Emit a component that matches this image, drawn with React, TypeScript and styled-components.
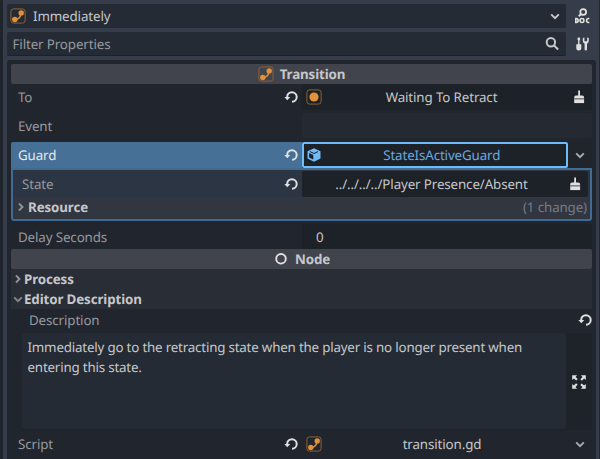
import React from "react";
import styled, { createGlobalStyle } from "styled-components";

const color = {
  base: "#363d4a",
  panel: "#21252e",
  field: "#252b34",
  value: "#1d2128",
  header: "#41444c",
  section: "#292d36",
  accent: "#70bafa",
  guard: "#467096",
  orange: "#e0913a",
  label: "#96999d",
  text: "#c5c7ca",
  icon: "#e0e0e0",
};

const GlobalStyle = createGlobalStyle`
  * { box-sizing: border-box; }
  body {
    margin: 0;
    background: ${color.base};
    font-family: "Noto Sans", sans-serif;
    font-size: 13.35px;
    line-height: 20px;
    letter-spacing: -0.12px;
    color: ${color.text};
    text-rendering: geometricPrecision;
  }
  svg { display: block; flex: none; }
`;

const Dock = styled.main`
  width: 600px;
  height: 459px;
  overflow: hidden;
  display: flex;
  flex-direction: column;
  padding: 4px 3px 0 4px;
  background: ${color.base};
  border-left: 3px solid #1f232b;
  border-right: 1px solid #23272f;
`;

const Toolbar = styled.div`
  display: grid;
  grid-template-columns: 559px 1fr;
  grid-template-rows: 24px 24px;
  row-gap: 4px;
  margin-bottom: 4px;
`;

const ToolField = styled.div<{ $inset?: boolean }>`
  display: flex;
  align-items: center;
  background: ${color.field};
  border-radius: 2px;
  border-bottom: ${(p) => (p.$inset ? "1px solid #1d2129" : "none")};
  color: ${(p) => (p.$inset ? color.label : color.text)};
  padding: 0 6px 0 ${(p) => (p.$inset ? 5.5 : 3)}px;
`;

const ToolLabel = styled.span<{ $gap?: number }>`
  flex: 1;
  margin-left: ${(p) => p.$gap ?? 0}px;
`;

const ToolButton = styled.button`
  display: flex;
  align-items: center;
  justify-content: center;
  padding: 0 0 0 1px;
  border: 0;
  background: none;
`;

const Inspector = styled.section`
  flex: 1;
  display: flex;
  flex-direction: column;
  width: 589px;
  padding: 4px 4px 0;
  background: ${color.panel};
  border-radius: 3px 3px 0 0;
`;

const Category = styled.h2`
  flex: none;
  display: flex;
  align-items: center;
  justify-content: center;
  gap: 6px;
  height: 20px;
  margin: 0;
  background: ${color.header};
  border-radius: 2px;
  font-size: 13.35px;
  font-weight: 700;
`;

const Row = styled.div<{ $height: number; $after?: number }>`
  flex: none;
  display: grid;
  grid-template-columns: 291px 1fr;
  height: ${(p) => p.$height}px;
  margin-bottom: ${(p) => p.$after ?? 0}px;
`;

const Label = styled.div<{ $variant?: "guard" | "state" }>`
  display: flex;
  align-items: center;
  justify-content: space-between;
  padding: 0 4px 0 ${(p) => (p.$variant === "state" ? 9 : 7)}px;
  color: ${(p) => (p.$variant === "guard" ? "#e3eaf0" : color.label)};
  background: ${(p) => (p.$variant === "guard" ? color.guard : p.$variant === "state" ? "#2b3543" : "none")};
  border-radius: ${(p) => (p.$variant === "guard" ? "2px 0 0 0" : "0")};
`;

const Value = styled.div<{ $tone?: "field" | "none" }>`
  display: flex;
  align-items: center;
  min-width: 0;
  background: ${(p) => (p.$tone === "field" ? "#242932" : p.$tone === "none" ? "none" : color.value)};
  border-radius: 2px;
  padding: 0 ${(p) => (p.$tone === "none" ? 7 : 5)}px 0 4px;
`;

const ValueText = styled.span<{ $inset?: number }>`
  flex: 1;
  text-align: center;
  white-space: nowrap;
  padding-right: ${(p) => p.$inset ?? 0}px;
`;

const NumberText = styled.span`
  padding-left: 10px;
`;

const ResourceValue = styled.div`
  display: grid;
  grid-template-columns: 265.5px 1fr;
  background: #20242b;
`;

const ResourceButton = styled.div`
  display: flex;
  align-items: center;
  height: 26px;
  padding: 0 4px 0 2px;
  border: 2px solid ${color.accent};
  border-radius: 2px;
  background: ${color.value};
  color: #67a9e2;
`;

const MenuSlot = styled.div`
  display: flex;
  align-items: center;
  justify-content: center;
`;

const SubInspector = styled.div`
  flex: none;
  height: 53px;
  margin-bottom: 3px;
  border: 2px solid #426b91;
  border-radius: 0 0 3px 3px;
  background: #2f3541;
  padding: 1px 2px 0 0;
`;

const SubRow = styled.div`
  display: grid;
  grid-template-columns: 289px 1fr;
  height: 26px;
`;

const Section = styled.div<{ $nested?: boolean }>`
  flex: none;
  display: flex;
  align-items: center;
  height: 20px;
  padding: 0 1px 0 ${(p) => (p.$nested ? 3 : 2)}px;
  gap: ${(p) => (p.$nested ? 2 : 1)}px;
  background: ${(p) => (p.$nested ? "#313641" : color.section)};
  font-weight: 700;
`;

const Changes = styled.span`
  margin-left: auto;
  font-weight: 400;
  color: #777b83;
`;

const DescriptionLabel = styled.div`
  flex: none;
  display: flex;
  align-items: center;
  justify-content: space-between;
  height: 24px;
  padding: 0 0 3px 18px;
  color: ${color.label};
`;

const Editor = styled.div`
  flex: none;
  display: grid;
  grid-template-columns: 544px 1fr;
  height: 97px;
  margin: 0 0 1px 11px;
  background: #1e2229;
`;

const TextArea = styled.p`
  margin: 0 0 1px;
  padding: 4px 5.5px;
  background: ${color.field};
  border-radius: 2px;
  white-space: pre-line;
  letter-spacing: -0.19px;
`;

const TransitionIcon = () => (
  <svg width="16" height="16" viewBox="0 0 16 16" fill="none">
    <rect x=".9" y=".9" width="14.2" height="14.2" rx="2.6" stroke="#8d6135" strokeWidth="1" />
    <path d="M5 11.5Q10.5 11.5 11 5" stroke={color.orange} strokeWidth="1.6" />
    <circle cx="4.8" cy="11.5" r="2.7" fill={color.orange} />
    <circle cx="11.2" cy="4.9" r="2.7" fill={color.orange} />
  </svg>
);

const StateIcon = () => (
  <svg width="16" height="16" viewBox="0 0 16 16">
    <rect x=".9" y=".9" width="14.2" height="14.2" rx="2.6" fill="none" stroke="#8d6135" />
    <circle cx="8" cy="8" r="4.6" fill={color.orange} />
  </svg>
);

const RevertIcon = () => (
  <svg width="14" height="14" viewBox="0 0 14 14">
    <path d="M3.2 8V6.9A4.75 4.75 0 1 1 8 11.7" fill="none" stroke={color.icon} strokeWidth="2" />
    <path d="M.3 6.9h6L3.3 10.3z" fill={color.icon} />
  </svg>
);

const BrushIcon = () => (
  <svg width="16" height="16" viewBox="0 0 16 16" fill={color.icon}>
    <path d="M7.2 1.5h1.8v5h2.4q1.7 0 1.7 2v.7H3.2v-.7q0-2 1.7-2h2.3z" />
    <path d="M3.2 10.2h9.9v3.9H3.2z" />
    <path d="M3.2 9.1h9.9v1.2H3.2z" fill="#85878a" />
  </svg>
);

const Chevron = ({ dir = "down", tone = "#b8babd" }: { dir?: "down" | "right"; tone?: string }) => (
  <svg width="10" height="10" viewBox="0 0 10 10" fill="none" stroke={tone} strokeWidth="1.9">
    <path d={dir === "down" ? "M1.2 3.4 5 7.2 8.8 3.4" : "M3 1.5 6.5 5 3 8.5"} />
  </svg>
);

const SearchIcon = () => (
  <svg width="16" height="16" viewBox="0 0 16 16" fill="none" stroke={color.text} strokeWidth="2">
    <circle cx="6.9" cy="6.2" r="4.2" />
    <path d="m9.8 9.2 4.3 4.3" />
  </svg>
);

const DocIcon = () => (
  <svg width="16" height="16" viewBox="0 0 16 16" fill="none" stroke={color.icon}>
    <circle cx="9.2" cy="4" r="2.9" strokeWidth="1.8" />
    <path d="M7.2 6 4.7 8.3" strokeWidth="1.9" />
    <path d="M1.8 10.5v4h.6q1.7 0 1.7-2t-1.7-2z" strokeWidth="1.6" />
    <ellipse cx="8" cy="12.5" rx="1.9" ry="2" strokeWidth="1.6" />
    <path d="M15.4 10.5h-.9q-1.9 0-1.9 2t1.9 2h.9" strokeWidth="1.6" />
  </svg>
);

const ToolsIcon = () => (
  <svg width="16" height="16" viewBox="0 0 16 16" fill={color.icon}>
    <path d="M3.9 1.5h1.8l.5 1.7-.7 1.3v3.7h1.8v3.7a2.5 2.5 0 0 1-5 0V8.2h1.8V4.5l-.7-1.3z" />
    <path d="M8.8 2v3q0 1.9 1.8 2.7v5.5q0 1.2 1.2 1.2t1.2-1.2V7.7Q14.8 6.9 14.8 5V2L13.2 1.5v3.7h-2.8V1.5z" />
  </svg>
);

const CubeIcon = () => (
  <svg width="16" height="16" viewBox="0 0 16 16">
    <path d="M8 1.2 14.5 4.2v7.3L8 14.8 1.5 11.5V4.2z" fill={color.accent} />
    <path d="M3.1 6.1 7.3 8v4.6L3.1 10.5z" fill={color.value} />
    <path d="M4 4.6 8 6.5l4-1.9" fill="none" stroke={color.value} strokeWidth="1" />
  </svg>
);

const NodeIcon = () => (
  <svg width="16" height="16" viewBox="0 0 16 16">
    <circle cx="8" cy="7.8" r="4.8" fill="none" stroke={color.icon} strokeWidth="1.9" />
  </svg>
);

const ExpandIcon = () => (
  <svg width="16" height="16" viewBox="0 0 16 16" fill={color.icon}>
    {[0, 90, 180, 270].map((angle) => (
      <path key={angle} transform={`rotate(${angle} 8 8)`} d="M1.2 1.2h4.9L4.5 2.9l2.2 2.2-1.5 1.5L2.9 4.4 1.2 6.1z" />
    ))}
  </svg>
);

export default function App() {
  return (
    <>
      <GlobalStyle />
      <Dock>
        <Toolbar>
          <ToolField>
            <TransitionIcon />
            <ToolLabel $gap={7}>Immediately</ToolLabel>
            <Chevron tone="#c8cacc" />
          </ToolField>
          <ToolButton aria-label="Open documentation"><DocIcon /></ToolButton>
          <ToolField $inset>
            <ToolLabel>Filter Properties</ToolLabel>
            <SearchIcon />
          </ToolField>
          <ToolButton aria-label="Object tools"><ToolsIcon /></ToolButton>
        </Toolbar>
        <Inspector>
          <Category><TransitionIcon />Transition</Category>
          <Row $height={26} $after={3}>
            <Label>To<RevertIcon /></Label>
            <Value><StateIcon /><ValueText $inset={10}>Waiting To Retract</ValueText><BrushIcon /></Value>
          </Row>
          <Row $height={25} $after={4}>
            <Label>Event</Label>
            <Value $tone="field" />
          </Row>
          <Row $height={26}>
            <Label $variant="guard">Guard<RevertIcon /></Label>
            <ResourceValue>
              <ResourceButton><CubeIcon /><ValueText>StateIsActiveGuard</ValueText></ResourceButton>
              <MenuSlot><Chevron tone="#aaacb0" /></MenuSlot>
            </ResourceValue>
          </Row>
          <SubInspector>
            <SubRow>
              <Label $variant="state">State<RevertIcon /></Label>
              <Value><ValueText $inset={10}>../../../../Player Presence/Absent</ValueText><BrushIcon /></Value>
            </SubRow>
            <Section $nested>
              <Chevron dir="right" tone="#8f9298" />Resource<Changes>(1 change)</Changes>
            </Section>
          </SubInspector>
          <Row $height={25}>
            <Label>Delay Seconds</Label>
            <Value><NumberText>0</NumberText></Value>
          </Row>
          <Category><NodeIcon />Node</Category>
          <Section><Chevron dir="right" tone="#8f9298" />Process</Section>
          <Section><Chevron tone="#85888e" />Editor Description</Section>
          <DescriptionLabel>Description<RevertIcon /></DescriptionLabel>
          <Editor>
            <TextArea>{"Immediately go to the retracting state when the player is no longer present when\nentering this state."}</TextArea>
            <MenuSlot><ExpandIcon /></MenuSlot>
          </Editor>
          <Row $height={26}>
            <Label>Script<RevertIcon /></Label>
            <Value $tone="none"><TransitionIcon /><ValueText $inset={13}>transition.gd</ValueText><Chevron tone="#aaacb0" /></Value>
          </Row>
        </Inspector>
      </Dock>
    </>
  );
}
